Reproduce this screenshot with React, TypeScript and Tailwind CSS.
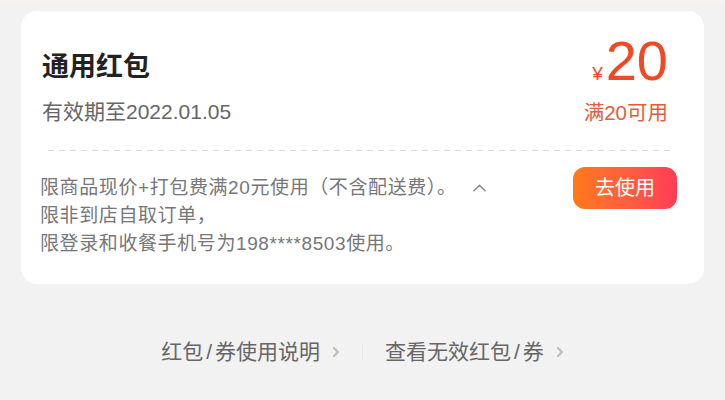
const font = { fontFamily: '"Liberation Sans", "Noto Sans CJK SC", sans-serif' };

const Chevron = ({ className }: { className?: string }) => (
  <svg viewBox="0 0 8 12" className={className} fill="none" stroke="currentColor" strokeWidth="2" strokeLinecap="round" strokeLinejoin="round">
    <path d="M2 2l4 4-4 4" />
  </svg>
);

export default function App() {
  return (
    <div className="min-h-[400px] w-[725px] bg-[#f2f2f2]" style={font}>
      <div className="h-[3px] bg-[#f6f3ee]" />
      <div className="mx-[21px] mt-[8px] rounded-[16px] bg-white px-[21px] pt-[22px] pb-[26px]">
        {/* top */}
        <div className="flex justify-between">
          <div className="pt-[17px]">
            <div className="text-[27px] font-semibold leading-[34px] text-[#222]">通用红包</div>
            <div className="mt-[14px] text-[21px] leading-[28px] text-[#666]">有效期至2022.01.05</div>
          </div>
          <div className="flex flex-col items-end pr-[15px]">
            <div className="flex items-baseline text-[#ef4a25]">
              <span className="mr-[3px] text-[19px] font-medium leading-none">¥</span>
              <span className="text-[56px] leading-[56px]">20</span>
            </div>
            <div className="mt-[10px] text-[20.5px] leading-[28px] text-[#e35d3c]">满20可用</div>
          </div>
        </div>

        <div className="mt-[23px] ml-[6px] mr-[8px] h-px bg-[repeating-linear-gradient(to_right,#dcdcdc_0_6px,transparent_6px_11px)]" />

        {/* rules */}
        <div className="mt-[16px] flex items-start justify-between">
          <div className="-ml-[2px] pt-[7px] text-[19px] leading-[28px] tracking-[0.6px] text-[#777]">
            <div className="flex items-center">
              <span>限商品现价+打包费满20元使用（不含配送费）。</span>
              <svg viewBox="0 0 14 8" className="ml-[16px] h-[8px] w-[13px]" fill="none" stroke="#888" strokeWidth="1.6" strokeLinecap="round" strokeLinejoin="round">
                <path d="M1 7l6-6 6 6" />
              </svg>
            </div>
            <div>限非到店自取订单，</div>
            <div>限登录和收餐手机号为198****8503使用。</div>
          </div>
          <button className="mr-[6px] flex h-[42px] w-[104px] items-center justify-center rounded-[12px] bg-gradient-to-r from-[#ff7a14] to-[#ff3b54] text-[20px] text-white">
            去使用
          </button>
        </div>
      </div>

      {/* links */}
      <div className="mt-[54px] flex items-center justify-center text-[21px] leading-[28px] text-[#666]">
        <span>
          红包<span className="mx-[3px]">/</span>券使用说明
        </span>
        <Chevron className="ml-[12px] h-[12px] w-[8px] text-[#bbb]" />
        <div className="mx-[22px] h-[15px] w-px bg-[#e6e6e6]" />
        <span>
          查看无效红包<span className="mx-[3px]">/</span>券
        </span>
        <Chevron className="ml-[12px] h-[12px] w-[8px] text-[#bbb]" />
      </div>
    </div>
  );
}
